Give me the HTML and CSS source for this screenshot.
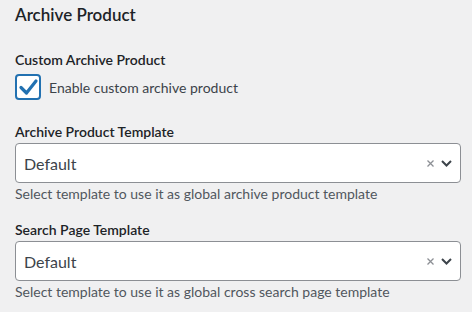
FILE: index.html
```html
<!DOCTYPE html>
<html>
<head>
  <meta charset="utf-8">
  <link rel="stylesheet" href="styles.css">
</head>
<body>
  <h2 class="section-title">Archive Product</h2>

  <div class="field field-check">
    <div class="field-label">Custom Archive Product</div>
    <label class="check-row">
      <span class="check-box">
        <svg width="22" height="22" viewBox="0 0 22 22"><path d="M4 11.5 L9.5 17 L19 5" fill="none" stroke="#2271b1" stroke-width="3.2" stroke-linecap="round" stroke-linejoin="round"/></svg>
      </span>
      <span class="check-text">Enable custom archive product</span>
    </label>
  </div>

  <div class="field">
    <div class="field-label">Archive Product Template</div>
    <div class="select-box">
      <span class="select-value">Default</span>
      <svg class="select-clear" width="7" height="7" viewBox="0 0 7 7"><path d="M0.5 0.5 L6.5 6.5 M6.5 0.5 L0.5 6.5" stroke="#8c8f94" stroke-width="1.3"/></svg>
      <svg class="select-arrow" width="11" height="7" viewBox="0 0 11 7"><path d="M1 1 L5.5 5.5 L10 1" fill="none" stroke="#3c434a" stroke-width="2"/></svg>
    </div>
    <p class="help">Select template to use it as global archive product template</p>
  </div>

  <div class="field">
    <div class="field-label">Search Page Template</div>
    <div class="select-box">
      <span class="select-value">Default</span>
      <svg class="select-clear" width="7" height="7" viewBox="0 0 7 7"><path d="M0.5 0.5 L6.5 6.5 M6.5 0.5 L0.5 6.5" stroke="#8c8f94" stroke-width="1.3"/></svg>
      <svg class="select-arrow" width="11" height="7" viewBox="0 0 11 7"><path d="M1 1 L5.5 5.5 L10 1" fill="none" stroke="#3c434a" stroke-width="2"/></svg>
    </div>
    <p class="help">Select template to use it as global cross search page template</p>
  </div>
</body>
</html>
```

FILE: styles.css
```css
/* Main Element Styles */
body {
  margin: 0;
  padding: 3px 11px 0 15px;
  background-color: #f0f0f1;
  font-family: Lato, "Noto Sans", sans-serif;
  color: #1d2327;
}
.section-title {
  font-size: 17px;
  font-weight: 600;
  margin: 0;
  line-height: 24px;
}

/* Field Styles */
.field {
  margin-top: 16px;
}
.section-title + .field {
  margin-top: 23px;
}
.field-check {
  padding-bottom: 6px;
}
.field-label {
  font-size: 14px;
  font-weight: 600;
  line-height: 20px;
}
.check-row {
  display: flex;
  align-items: center;
  gap: 8px;
  margin-top: 4px;
}
.check-box {
  width: 22px;
  height: 22px;
  border: 2px solid #2271b1;
  border-radius: 4px;
  background: #fff;
  display: flex;
}
.check-text {
  font-size: 14px;
  color: #3c434a;
}

/* Select Styles */
.select-box {
  display: flex;
  align-items: center;
  height: 38px;
  margin-top: 1px;
  border: 1px solid #8c8f94;
  border-radius: 4px;
  background: #fff;
  padding: 0 8px;
}
.select-value {
  flex: 1;
  font-size: 16px;
  color: #3c434a;
}
.select-clear {
  margin-right: 7px;
}
.help {
  margin: 0;
  padding-top: 1px;
  font-size: 14px;
  line-height: 20px;
  color: #50575e;
}
```
